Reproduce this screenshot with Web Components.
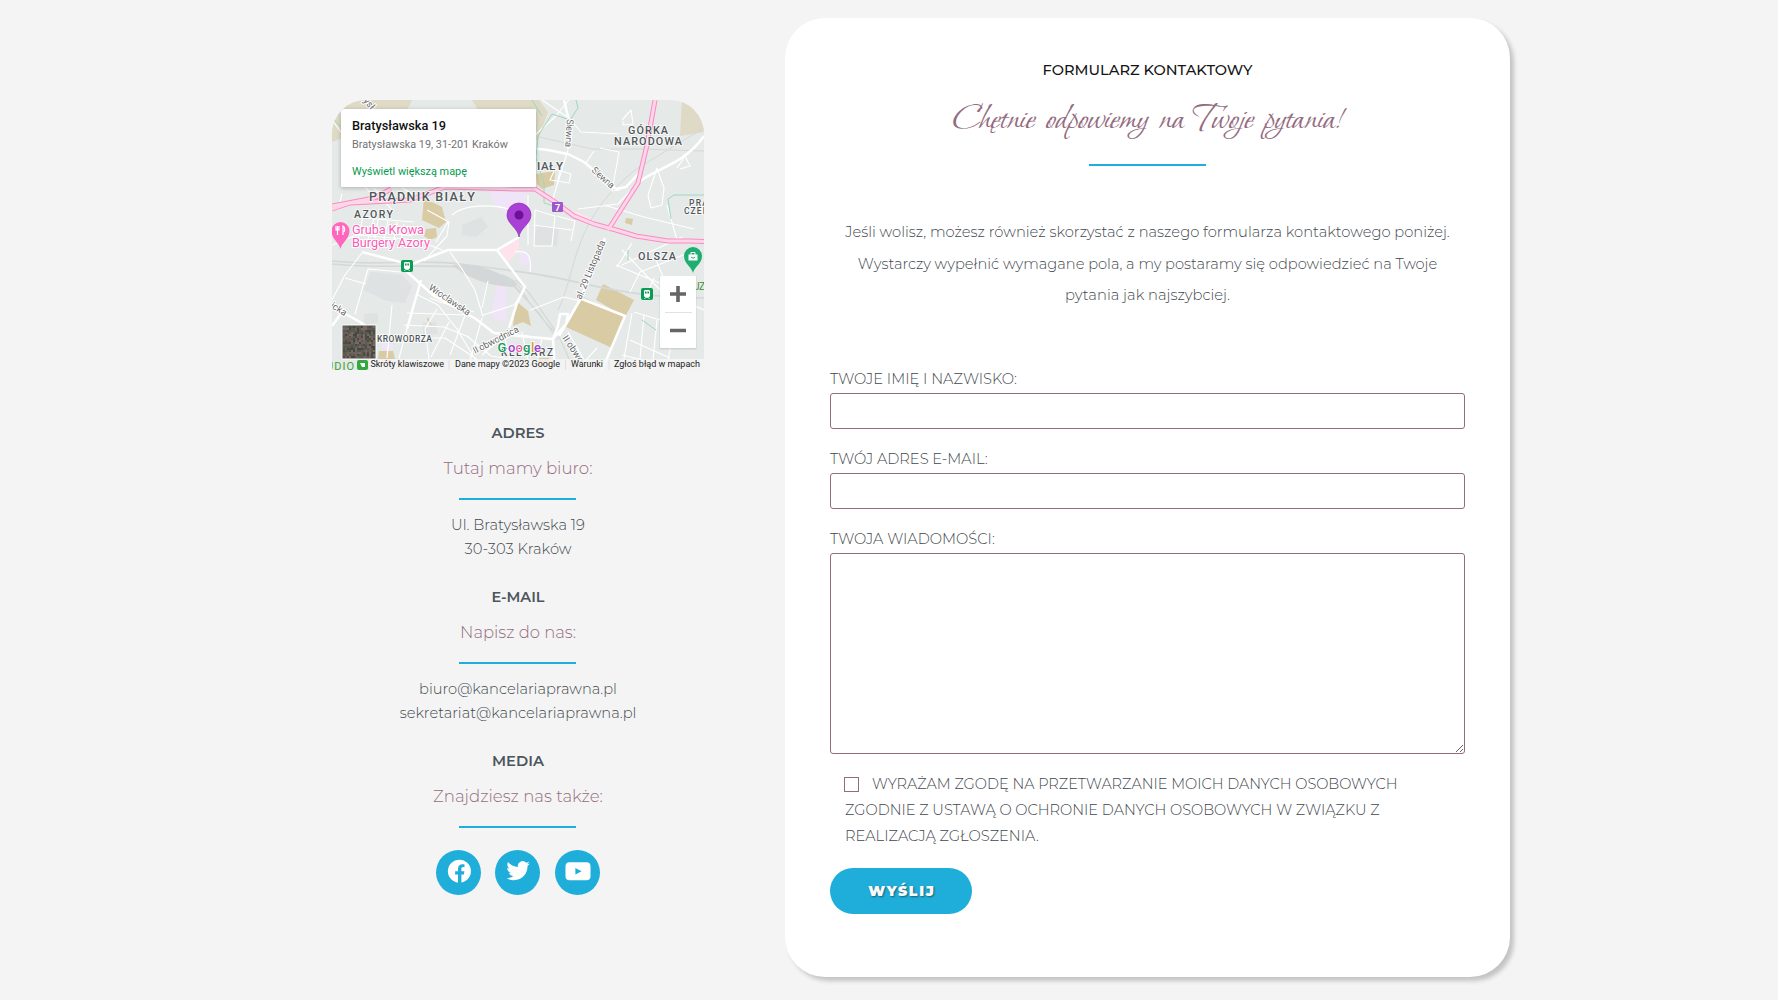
<!DOCTYPE html>
<html lang="pl">
<head>
<meta charset="utf-8">
<title>Kontakt</title>
<style>
html,body{margin:0;height:100%;background:#f4f4f4}
body{font-family:Montserrat,Inter,"Open Sans",sans-serif;overflow:hidden}
</style>
</head>
<body>
<contact-page></contact-page>
<script>
const define=(name,html,setup)=>{
  const t=document.createElement('template');t.innerHTML=html;
  customElements.define(name,class extends HTMLElement{
    constructor(){super();this.attachShadow({mode:'open'}).append(t.content.cloneNode(true));}
    connectedCallback(){if(setup)setup.call(this,this.shadowRoot);}
  });
};

/* One line of text that spans the measure given in "w": sized to it, or letter-spaced with "track". */
define('text-line',`<style>
:host{display:block;white-space:nowrap;line-height:24px;font-size:14.5px;font-weight:300;color:#3f484e}
span{display:inline-block;line-height:inherit;vertical-align:top}
</style><span><slot></slot></span>`,function(root){
  const w=+this.getAttribute('w'),s=root.querySelector('span');
  if(!w)return;
  const now=s.getBoundingClientRect().width;
  if(this.hasAttribute('track')){
    const n=[...this.textContent].length,d=(w-now)/(n-1);
    s.style.letterSpacing=d+'px';s.style.marginRight=-d+'px';
  }else s.style.fontSize=parseFloat(getComputedStyle(s).fontSize)*(w+1)/now+'px';
});

define('accent-rule',`<style>:host{display:block;width:117px;height:2px;background:#1faed9;margin:0 auto}</style>`);

define('social-link',`<style>
:host{display:flex;width:45px;height:45px;border-radius:50%;background:#1faed9;align-items:center;justify-content:center}
svg{width:26px;height:26px;fill:#fff;margin-top:-3px}
svg{display:none}
:host([kind=facebook]) .facebook,:host([kind=twitter]) .twitter,:host([kind=youtube]) .youtube{display:block}
</style>
<svg class="facebook" viewBox="0 0 26 26"><circle cx="13.4" cy="13.2" r="11.5"/><path fill="#1faed9" d="M12 25v-8.600H9.100v-3.200H12v-2.500c0-3 1.800-4.500 4.300-4.500 1.200 0 2.200.2 2.200.2v2.600h-1.300c-1.300 0-1.800.8-1.800 1.700v2.500h3l-.5 3.200h-2.500V25z"/></svg>
<svg class="twitter" viewBox="0 0 26 26"><path transform="translate(1.400 .9) scale(.98)" d="M23.95 4.57a10 10 0 0 1-2.82.78 4.96 4.96 0 0 0 2.16-2.73c-.95.56-2 .96-3.13 1.19a4.92 4.92 0 0 0-8.38 4.48C7.69 8.100 4.070 6.130 1.640 3.160a4.82 4.82 0 0 0-.67 2.480c0 1.710.87 3.210 2.190 4.100a4.9 4.9 0 0 1-2.230-.62v.06a4.92 4.92 0 0 0 3.950 4.830 5 5 0 0 1-2.210.08 4.94 4.94 0 0 0 4.600 3.420A9.87 9.87 0 0 1 0 19.540a13.99 13.99 0 0 0 7.560 2.210c9.050 0 14-7.500 14-13.980 0-.21 0-.42-.02-.63a9.94 9.94 0 0 0 2.410-2.570z"/></svg>
<svg class="youtube" viewBox="0 0 26 26"><rect x=".5" y="4.2" width="25" height="18" rx="4"/><path fill="#1faed9" d="M10.400 9.900v6.600l6.200-3.300z"/></svg>`);

define('info-block',`<style>
:host{display:block;text-align:center}
::slotted([slot=title]){font-weight:600!important;color:#4c555c!important}
::slotted([slot=sub]){margin:11px 0 18px;color:#946c80!important}
.body{padding-top:13px}
accent-rule{margin-left:127px}
</style><slot name="title"></slot><slot name="sub"></slot><accent-rule></accent-rule><div class="body"><slot></slot></div>`);

define('map-card',`<style>
:host{display:block;background:#fff;width:195px;height:78px;box-sizing:border-box;padding:8px 11px;box-shadow:0 1px 4px rgba(0,0,0,.25);font-family:Roboto,sans-serif;border-radius:1px}
text-line{font-weight:400;line-height:18px;font-size:11px;color:#737373}
.s{margin-top:1px}
.t{font-weight:500;font-size:13px;color:#111}
.l{color:#069a4e;margin-top:9px}
</style><text-line class="t" w="93">Bratysławska 19</text-line><text-line class="s" w="155">Bratysławska 19, 31-201 Kraków</text-line><text-line class="l" w="114">Wyświetl większą mapę</text-line>`);

define('city-map',`<style>
:host{display:block;position:relative;width:372px;height:270px;overflow:hidden;border-radius:34px 34px 0 0;background:#e5e9e8}
svg{display:block}
map-card{position:absolute;left:9px;top:9px}
text{font-family:Roboto,sans-serif}
.st{fill:none;stroke:#fff;stroke-linejoin:round}
.rail{fill:none;stroke:#d4d8d8}
.park{fill:#d9cba3}
.green{fill:none;stroke:#9dd8bd}
.area{fill:#50565a;font-weight:500;stroke:#fff;stroke-width:2px;paint-order:stroke;stroke-opacity:.7}
.road{fill:#666;font-size:9.500px;stroke:#fff;stroke-width:2px;paint-order:stroke}
.at{fill:#222;font-size:9.200px}
</style>
<svg width="372" height="270" viewBox="0 0 372 270">
<rect width="372" height="270" fill="#e5e9e8"/>
<g fill="#dee2e2"><path d="M39 172L70 175 80 186 73 203 55 201 31 190z"/><path d="M32 214l14-1v10l-14 2zM90 223l14-1 2 12-15 1zM130 125l20-8 6 10-12 10-14-2zM205 125l22 3-2 18-24-1z"/></g>
<g class="park" opacity=".5"><path d="M0 12l8-5 2 31-10 4zM140 0h67l9 12-10 28-30-10-30-20zM350 0h22v32l-24 4zM20 0l60 0-5 10H10z"/></g>
<g class="park"><path d="M92 98l18 9 4 15-7 6-17-8zM94 129l10-1 1 9-7 3-6-4zM204 74l19-3-1 14-12 4-5-5zM271 184l31 16-9 17-29-17zM251 197l41 20-12 31-46-21zM184 201l12 10 3 15-8-4-10 4zM47 251h14l2 8H46zM96 217l4 9-5-6zM294 118l7 1-1 6-7-2zM205 258h12v7h-12z"/></g>
<g fill="#f0e4f8"><path d="M158 91l36 1v18l-24 2-12-16zM165 183l9 3v37l-15-7zM188 153l10 2v10l-11-1zM50 244h11v6H50z"/></g>
<g fill="#ffe3ec"><path d="M240 110l21 9 1 7-15-5zM168 149l19-10v11l-12 14z"/></g>
<g class="rail" stroke-width="1.700"><path d="M0 161c40 5 90-2 128 3 50 6 90 11 124 20 30 6 65 14 120 14M0 164c50 5 90 0 130 3"/><path stroke-width="1.200" d="M183 180c14 8 26 32 43 54l16 36M183 186c20 22 25 32 41 47M170 175c12 3 19 13 26 25M176 180l30 32 20 28" /><path stroke-width="1" d="M203 36l57 13h50l62 2M306 68l66-40M226 210c20-40 12-90 80-142"/></g>
<path d="M120 165c16-2 40 2 64 18v4c-24 0-48-8-64-22z" fill="#d3d7d7"/>
<g class="st" stroke-width="1.150">
<path d="M30 153L13 175 0 200M13 178l21 6M36 169l-13 45M36 169l33 3M89 180l-14 49-8 29M86 195l20 10 19 24 24 40M98 198l10 4 34 10M75 213l60 2M72 225l40 2 25 10M68 238l45 0 33 22M105 209l-12 20 5 37M117 222l-18 35M135 210l-17 45M150 218l-14 50M118 152l12 17 13 21 8 27M156 181l-6 27M151 215l31-10 10-15M60 205L55 258"/>
<path d="M0 145l25-10 60 5 30 12M95 110l22 12-2 14-23 25M120 115c10-10 40-12 60-5M116 122l-12 20M70 88l22 12M30 118l52 4M26 140l5-24M34 147l8-28M43 138l3-18M50 148l6-27M60 150l5-28M69 140l3-16M30 130l50 6M10 94l-4 16M42 88l18 22"/>
<path d="M0 20l30 40-10 25M10 60l30 35"/>
<path d="M210 0l27 18 12 14 38 2M236 50l-17 55M218 80l19 3 2-9-16-5zM228 70l-3 15M201 125l39 5M203 110l20 6-3 30-18 0zM225 116l18 5-4 20M268 48l19 4-7 39 8-1M262 51l-8 12M290 20l9-10 2 14-10 1v-4M246 109l40-5 20-21M325 68l7 20-2 17-11 3-3-13 9-27M345 68l8-12 5 10-10 3M272 105l40 12 50 12M335 105l10 35M196 95v50M183 35l20 0 20-18 14-17"/>
<path d="M290 150l40 42 42 18M284 165l60 25M300 143l-15 24M308 172l-10 20M322 178l-10 22M290 165l60-28M308 172l56-22M322 155l10 24M302 212l26 8M300 213l-10 57M312 215l-5 55M325 220l-5 50M298 240l40 18M290 255l62 15M340 240l-6 30"/>
<path d="M183 152c12-2 17 2 15 20M198 210l34-13 16 4M210 238l-5 25M190 232l8 38M172 235l8 32M135 236l24 20 50 8M150 255l25-22 46 7M236 232l22 38M265 248l-20 22"/>
</g>
<g class="st" stroke-width="2.500"><path d="M0 226l10-14 18 10 12 8M232 0l6 25-2 24M183 57c20-14 34-6 53-3l16 8 32 27 10-2 14-15M306 83c15-14 45-17 66-47M250 199l43 17-23 54M75 229l14-49M162 233l25 3 34 3 5-13 2-12 8 0-2 10-13 15 2 31M273 138l-24 60-22 38M72 169l30 27 42 23 18 14M30 152l42 11M75 166l41-16h49l22-13M165 150l28 37-8 16-8 25"/></g>
<path class="green" d="M244 0l2 8-8 12-18-6-14 22-2 22 8 25 0 20 14 4M372 95h-30l-6 4 3 20M0 17l9 10M310 220l14 10M296 150v10M200 0l10 16"/>
<g fill="none" stroke="#f98cc4" stroke-width="5"><path d="M0 109l18-6 20-1 40-2 35-13 70 2h20l20 13 19 14 20 8 22 6 20 6 32 5h22l36 1"/><path d="M323 0l-8 45-9 38-30 47M0 106l42-8 17-9"/></g>
<g fill="none" stroke="#ffd5e8" stroke-width="3"><path d="M0 109l18-6 20-1 40-2 35-13 70 2h20l20 13 19 14 20 8 22 6 20 6 32 5h22l36 1"/><path d="M323 0l-8 45-9 38-30 47M0 106l42-8 17-9"/></g>

<g class="area">
<text x="37" y="101" font-size="12.500" textLength="106">PRĄDNIK BIAŁY</text><text x="22" y="118" font-size="10.500" textLength="39">AZORY</text>
<text x="205" y="69.500" font-size="11.500" textLength="26">IAŁY</text><text x="296" y="33.500" font-size="10.800" textLength="40">GÓRKA</text><text x="282" y="44.500" font-size="10.800" textLength="68">NARODOWA</text>
<text x="357" y="105.500" font-size="8.500" textLength="19">PRA</text><text x="352" y="113.500" font-size="8.500" textLength="24">CZER</text><text x="306" y="159.500" font-size="10.800" textLength="38">OLSZA</text>
<text x="45" y="242" font-size="8.500" textLength="55">KROWODRZA</text><text x="169" y="255.500" font-size="10" textLength="52">KLEPARZ</text></g>
<g class="road">
<text transform="translate(31 1) rotate(50)" textLength="12">ysł</text>
<text transform="translate(235 19) rotate(94)" textLength="28">Siewna</text><text transform="translate(259 71) rotate(42)" textLength="27">Siewna</text>
<text transform="translate(96 189) rotate(34)" textLength="48">Wrocławska</text><text transform="translate(-2 207) rotate(33)" textLength="17">icka</text>
<text transform="translate(143 254) rotate(-27)" textLength="50">II obwodnica</text><text transform="translate(249 200) rotate(-67)" textLength="63">al. 29 Listopada</text><text transform="translate(230 238) rotate(56)" textLength="31">II obwo</text></g>
<g fill="#f95cb5" stroke="#fff" stroke-width="2" paint-order="stroke" font-size="12.700"><text x="20" y="134" textLength="72">Gruba Krowa</text><text x="20" y="146.500" textLength="78">Burgery Azory</text></g>
<path d="M8.500 149c-1-6-9-10-9-18a9 9 0 0 1 18 0c0 8-8 12-9 18z" fill="#ff66bd"/><path d="M4 126v4h3v-4M5.500 126v9M11 135v-9c2 1 2 4 1 6" fill="none" stroke="#fff" stroke-width="1.200"/>
<g id="train"><rect x="69" y="160" width="12" height="12" rx="2" fill="#0b9b52"/><rect x="72" y="162" width="6" height="7" rx="1.200" fill="#fff"/><path d="M73 163.500h1.600v2h-1.600zM75.400 163.500h1.600v2h-1.600z" fill="#0b9b52"/><path d="M72.500 171l1-1.500h3l1 1.500" fill="none" stroke="#fff" stroke-width=".8"/></g><use href="#train" x="240" y="28"/>
<rect x="220" y="102" width="11" height="10" rx="1" fill="#9b59c9"/><text x="223" y="110.500" font-size="9" font-weight="700" fill="#fff">7</text>
<path d="M187 137c-1-9-12-13-12-22a12 12 0 0 1 24 0c0 9-11 13-12 22z" fill="#aa41d4" stroke="#8d31b5" stroke-width=".7"/><circle cx="187" cy="115" r="4.500" fill="#6b1394"/>
<path d="M361 173c-1-6-9-9-9-17a9 9 0 0 1 18 0c0 8-8 11-9 17z" fill="#1fae71"/><path d="M356.500 154.500h9v6h-9z" fill="#fff"/><path d="M359 155v-2.500h4v2.500" fill="none" stroke="#fff"/><path d="M359 157q2 2.500 4 0" fill="none" stroke="#1fae71"/>
<text x="361" y="190" font-size="10" textLength="12" fill="#3d8e2d">UZ</text><text x="-6" y="269.500" font-size="11" fill="#43a22f" textLength="28">UDIO</text>
<rect x="25" y="260" width="11" height="10" rx="2" fill="#32a83e"/><path d="M28 263h5v4h-3z" fill="#fff"/>
<text y="252" font-size="13" font-weight="500" stroke="#fff" stroke-width="1.500" paint-order="stroke" x="165.500 176 183.500 191 199 202"><tspan fill="#159b5c">G</tspan><tspan fill="#9b42cf">o</tspan><tspan fill="#ee62b0">o</tspan><tspan fill="#159b5c">g</tspan><tspan fill="#d49b25">l</tspan><tspan fill="#9b42cf">e</tspan></text>
<path d="M37 259h335v11H37z" fill="#f5f5f5" opacity=".75"/>
<path d="M117 260v10M233.500 260v10M277 260v10" stroke="#e0e0e0"/>
<g class="at"><text x="38.500" y="267" textLength="73.500" lengthAdjust="spacingAndGlyphs">Skróty klawiszowe</text><text x="123" y="267" textLength="105" lengthAdjust="spacingAndGlyphs">Dane mapy ©2023 Google</text><text x="239" y="267" textLength="32" lengthAdjust="spacingAndGlyphs">Warunki</text><text x="282" y="267" textLength="86" lengthAdjust="spacingAndGlyphs">Zgłoś błąd w mapach</text></g>
<g id="thumb"></g>
<rect x="327.500" y="176.500" width="37" height="73" rx="1" fill="#bbb" opacity=".5"/><rect x="328" y="176" width="36" height="72" rx="1" fill="#fff"/>
<path d="M333 212.500h27" stroke="#e2e2e2"/><path d="M338 194h16M346 186v16M338 230.500h16" stroke="#666" stroke-width="3.600"/>
</svg><map-card></map-card>`,function(root){
  /* Satellite thumbnail: a mosaic of muted tiles with a fixed seed. */
  let s=7,r=()=>(s=(s*16807)%2147483647)/2147483647,out='<rect x="9.500" y="224.500" width="35" height="35" rx="1.500" fill="#fff"/><rect x="10.500" y="225.500" width="33" height="33" fill="#554f4a"/>';
  const c=['#6f625b','#4b4d45','#5c5852','#44463f','#756a64','#525a4b','#665a55'];
  for(let y=0;y<16;y++)for(let x=0;x<16;x++)out+=`<rect x="${11+x*2}" y="${226+y*2}" width="2" height="2" fill="${c[Math.floor(r()*7)]}"/>`;
  root.querySelector('#thumb').innerHTML=out;
});

define('form-field',`<style>
:host{display:block}
input,textarea{display:block;box-sizing:border-box;width:100%;height:36px;margin:0;border:1px solid #946c80;border-radius:3px;background:#fff;outline:0}
textarea{height:201px;resize:vertical}
.box{margin-top:2px}
</style><slot></slot><div class="box"></div>`,function(root){
  root.querySelector('.box').append(document.createElement(this.hasAttribute('multiline')?'textarea':'input'));
});

define('consent-check',`<style>
:host{display:block;padding-left:15px}
.row{display:flex;align-items:center;gap:13px;margin-left:-1px}
i{width:13px;height:13px;border:1px solid #946c80}
text-line{line-height:26px}
</style><div class="row"><i></i><text-line w="525">WYRAŻAM ZGODĘ NA PRZETWARZANIE MOICH DANYCH OSOBOWYCH</text-line></div>
<text-line w="534">ZGODNIE Z USTAWĄ O OCHRONIE DANYCH OSOBOWYCH W ZWIĄZKU Z</text-line>
<text-line w="193">REALIZACJĄ ZGŁOSZENIA.</text-line>`);

define('send-button',`<style>
:host{display:flex;width:142px;height:46px;border-radius:23px;background:#1faed9;align-items:center;justify-content:center}
text-line{color:#f8f8f8;font-weight:900;font-size:14px;text-shadow:1px 1px 2px rgba(0,0,0,.45);margin:-1px 0 0 0}
</style><text-line track w="65.500">WYŚLIJ</text-line>`);

define('contact-form',`<style>
:host{display:block;box-sizing:border-box;width:725px;height:959px;padding:40px 45px 0;background:#fff;border-radius:40px;box-shadow:4px 4px 4px #c4c4c4}
header{text-align:center}
.h{font-weight:500;color:#151515}
.script{font-family:"Bonheur Royale","Liberation Serif",serif;font-size:38px;line-height:40px;margin:17px 0 25px;color:#946c80;font-weight:400}
.intro{margin:51px 0 55px;text-align:center}
.intro text-line{line-height:31.700px}
.fields{display:flex;flex-direction:column;gap:18px}
consent-check{margin-top:17px}
send-button{margin-top:19px}
</style>
<header><text-line class="h" w="209">FORMULARZ KONTAKTOWY</text-line><text-line class="script">Chętnie odpowiemy na Twoje pytania!</text-line><accent-rule></accent-rule></header>
<div class="intro"><text-line w="604">Jeśli wolisz, możesz również skorzystać z naszego formularza kontaktowego poniżej.</text-line><text-line w="579">Wystarczy wypełnić wymagane pola, a my postaramy się odpowiedzieć na Twoje</text-line><text-line w="164">pytania jak najszybciej.</text-line></div>
<div class="fields"><form-field><text-line w="186">TWOJE IMIĘ I NAZWISKO:</text-line></form-field><form-field><text-line w="157">TWÓJ ADRES E-MAIL:</text-line></form-field><form-field multiline><text-line w="164">TWOJA WIADOMOŚCI:</text-line></form-field></div>
<consent-check></consent-check><send-button></send-button>`);

define('contact-page',`<style>
:host{display:flex;box-sizing:border-box;height:1000px;padding:18px 0 0 332px;gap:81px;align-items:flex-start}
aside{width:372px;padding-top:82px}
.info{display:flex;flex-direction:column;gap:24px;margin-top:51px}
.social{display:flex;padding:9px 0 0 104px}
.social :nth-child(2){margin:0 15px 0 14px}
</style>
<aside><city-map></city-map><div class="info">
<info-block><text-line slot="title" w="52">ADRES</text-line><text-line slot="sub" w="148">Tutaj mamy biuro:</text-line><text-line w="133">Ul. Bratysławska 19</text-line><text-line w="106">30-303 Kraków</text-line></info-block>
<info-block><text-line slot="title" w="52">E-MAIL</text-line><text-line slot="sub" w="115">Napisz do nas:</text-line><text-line w="197">biuro@kancelariaprawna.pl</text-line><text-line w="236">sekretariat@kancelariaprawna.pl</text-line></info-block>
<info-block><text-line slot="title" w="51">MEDIA</text-line><text-line slot="sub" w="169">Znajdziesz nas także:</text-line><div class="social"><social-link kind="facebook"></social-link><social-link kind="twitter"></social-link><social-link kind="youtube"></social-link></div></info-block>
</div></aside>
<contact-form></contact-form>`);
</script>
</body>
</html>
